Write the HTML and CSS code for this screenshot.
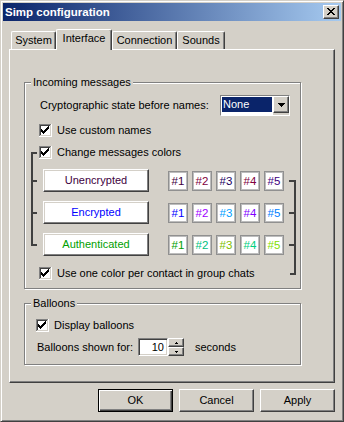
FILE: index.html
```html
<!DOCTYPE html>
<html>
<head>
<meta charset="utf-8">
<link rel="stylesheet" href="styles.css">
</head>
<body>
<svg class="defs" width="0" height="0">
  <defs>
    <symbol id="cb" viewBox="0 0 13 13">
      <rect x="0" y="0" width="13" height="13" fill="#ffffff"/>
      <path d="M0 0h12v1H0z M0 0h1v12H0z" fill="#808080"/>
      <path d="M1 1h10v1H1z M1 1h1v10H1z" fill="#404040"/>
      <path d="M1 11h11v1H1z M11 1h1v11h-1z" fill="#d4d0c8"/>
      <path d="M2 5h1v3H2z M3 6h1v3H3z M4 7h1v3H4z M5 6h1v3H5z M6 5h1v3H6z M7 4h1v3H7z M8 3h1v3H8z M9 2h1v3H9z" fill="#000000"/>
    </symbol>
  </defs>
</svg>
<div class="window">
  <div class="titlebar">
    <span class="title">Simp configuration</span>
    <span class="close bevel"><svg width="8" height="7" viewBox="0 0 8 7" shape-rendering="crispEdges"><path d="M0 0h2v1H0z M6 0h2v1H6z M1 1h2v1H1z M5 1h2v1H5z M2 2h4v1H2z M3 3h2v1H3z M2 4h4v1H2z M1 5h2v1H1z M5 5h2v1H5z M0 6h2v1H0z M6 6h2v1H6z" fill="#000"/></svg></span>
  </div>
  <div class="client">
    <div class="tabs">
      <div class="tab t-system">System</div>
      <div class="tab sel t-interface">Interface</div>
      <div class="tab t-connection">Connection</div>
      <div class="tab t-sounds">Sounds</div>
    </div>
    <div class="panel">
      <div class="group g-incoming">
        <div class="legend">Incoming messages</div>
        <div class="crypto-row">
          <span class="crypto-label">Cryptographic state before names:</span>
          <div class="combo sunken">
            <div class="combo-field"><span class="combo-sel">None</span></div>
            <div class="combo-btn bevel"><svg width="7" height="4" viewBox="0 0 7 4" shape-rendering="crispEdges"><path d="M0 0h7v1H0z M1 1h5v1H1z M2 2h3v1H2z M3 3h1v1H3z" fill="#000"/></svg></div>
          </div>
        </div>
        <div class="check-row cr-custom"><svg class="cb" width="13" height="13" shape-rendering="crispEdges"><use href="#cb"/></svg><span>Use custom names</span></div>
        <div class="colors">
          <div class="check-row cr-change"><svg class="cb" width="13" height="13" shape-rendering="crispEdges"><use href="#cb"/></svg><span>Change messages colors</span></div>
          <svg class="bracket-left" width="9" height="100" viewBox="0 0 9 100" shape-rendering="crispEdges"><path d="M1 6h2v94H1z M1 6h6v2H1z M3 34h4v2H3z M3 66h4v2H3z M3 98h4v2H3z" fill="#404040"/></svg>
          <div class="color-row r1">
            <div class="cbtn bevel c-unenc">Unencrypted</div>
            <div class="swatches">
              <span class="sw" style="color:#400040">#1</span>
              <span class="sw" style="color:#800040">#2</span>
              <span class="sw" style="color:#200060">#3</span>
              <span class="sw" style="color:#800040">#4</span>
              <span class="sw" style="color:#400080">#5</span>
            </div>
          </div>
          <div class="color-row r2">
            <div class="cbtn bevel c-enc">Encrypted</div>
            <div class="swatches">
              <span class="sw" style="color:#0000ff">#1</span>
              <span class="sw" style="color:#a000ff">#2</span>
              <span class="sw" style="color:#00a0ff">#3</span>
              <span class="sw" style="color:#8000ff">#4</span>
              <span class="sw" style="color:#0080ff">#5</span>
            </div>
          </div>
          <div class="color-row r3">
            <div class="cbtn bevel c-auth">Authenticated</div>
            <div class="swatches">
              <span class="sw" style="color:#00a000">#1</span>
              <span class="sw" style="color:#00c080">#2</span>
              <span class="sw" style="color:#80c000">#3</span>
              <span class="sw" style="color:#00d080">#4</span>
              <span class="sw" style="color:#80e000">#5</span>
            </div>
          </div>
          <div class="check-row cr-group"><svg class="cb" width="13" height="13" shape-rendering="crispEdges"><use href="#cb"/></svg><span>Use one color per contact in group chats</span></div>
          <svg class="bracket-right" width="8" height="108" viewBox="0 0 8 108" shape-rendering="crispEdges"><path d="M5 11h2v95H5z M0 11h5v2H0z M0 43h5v2H0z M0 75h5v2H0z M1 104h5v2H1z" fill="#404040"/></svg>
        </div>
      </div>
      <div class="group g-balloons">
        <div class="legend">Balloons</div>
        <div class="check-row cr-display"><svg class="cb" width="13" height="13" shape-rendering="crispEdges"><use href="#cb"/></svg><span>Display balloons</span></div>
        <div class="shown-row">
          <span class="shown-label">Balloons shown for:</span>
          <div class="edit sunken">10</div>
          <div class="spin">
            <div class="spin-btn bevel"><svg width="3" height="2" viewBox="0 0 3 2" shape-rendering="crispEdges"><path d="M1 0h1v1H1z M0 1h3v1H0z" fill="#000"/></svg></div>
            <div class="spin-btn bevel"><svg width="3" height="2" viewBox="0 0 3 2" shape-rendering="crispEdges"><path d="M0 0h3v1H0z M1 1h1v1H1z" fill="#000"/></svg></div>
          </div>
          <span class="seconds">seconds</span>
        </div>
      </div>
    </div>
    <div class="buttons">
      <div class="btn default">OK</div>
      <div class="btn bevel">Cancel</div>
      <div class="btn bevel">Apply</div>
    </div>
  </div>
</div>
</body>
</html>
```
FILE: styles.css
```css
html, body {
  margin: 0;
  padding: 0;
  background: #d4d0c8;
}
body {
  font-family: "Liberation Sans", Arial, sans-serif;
  font-size: 11px;
  color: #000;
}
.defs {
  position: absolute;
  width: 0;
  height: 0;
}
.window {
  width: 344px;
  height: 422px;
  box-sizing: border-box;
  background: #d4d0c8;
  border: 1px solid;
  border-color: #d4d0c8 #404040 #404040 #d4d0c8;
  box-shadow: inset 1px 1px #ffffff, inset -1px -1px #808080;
  padding: 2px;
}
.titlebar {
  height: 18px;
  display: flex;
  align-items: center;
  justify-content: space-between;
  padding: 0 2px;
  background: linear-gradient(to right, #0a246a, #a6caf0);
}
.title {
  color: #fff;
  font-weight: bold;
  font-size: 11.5px;
  line-height: 18px;
}
.bevel {
  box-sizing: border-box;
  background: #d4d0c8;
  border: 1px solid;
  border-color: #ffffff #404040 #404040 #ffffff;
  box-shadow: inset -1px -1px #808080, inset 1px 1px #d4d0c8;
}
.sunken {
  box-sizing: border-box;
  border: 1px solid;
  border-color: #808080 #ffffff #ffffff #808080;
  box-shadow: inset 1px 1px #404040, inset -1px -1px #d4d0c8;
}
.close {
  width: 16px;
  height: 14px;
  padding: 2px 0 0 3px;
}
.close svg { display: block; }
.client {
  padding: 8px 6px 0 6px;
}
.tabs {
  display: flex;
  align-items: flex-end;
  height: 20px;
  padding-left: 2px;
}
.tab {
  box-sizing: border-box;
  height: 18px;
  border-top: 1px solid #fff;
  border-left: 1px solid #fff;
  border-right: 1px solid #404040;
  border-radius: 2px 2px 0 0;
  box-shadow: inset -1px 0 #808080;
  background: #d4d0c8;
  text-align: center;
  line-height: 13px;
  padding-top: 2px;
}
.tab.sel {
  height: 21px;
  margin-bottom: -1px;
  position: relative;
  z-index: 1;
}
.t-system { width: 45px; }
.t-interface { width: 56px; }
.t-connection { width: 65px; }
.t-sounds { width: 48px; }
.panel {
  width: 326px;
  height: 334px;
  box-sizing: border-box;
  border: 1px solid;
  border-color: #ffffff #404040 #404040 #ffffff;
  box-shadow: inset -1px -1px #808080;
  padding: 32px 0 0 14px;
}
.group {
  width: 277px;
  box-sizing: border-box;
  border: 1px solid #808080;
  box-shadow: inset 1px 1px #ffffff, 1px 1px #ffffff;
  padding-bottom: 8px;
}
.g-balloons {
  margin-top: 14px;
}
.legend {
  width: fit-content;
  margin: -7px 0 0 6px;
  padding: 0 2px;
  background: #d4d0c8;
  line-height: 13px;
}
.crypto-row {
  display: flex;
  align-items: center;
  height: 21px;
  margin: 6px 0 0 15px;
}
.crypto-label {
  width: 180px;
  line-height: 13px;
}
.combo {
  display: flex;
  width: 70px;
  height: 21px;
}
.combo-field {
  flex: 1;
  background: #fff;
  padding: 1px;
}
.combo-sel {
  display: block;
  height: 15px;
  background: #0a246a;
  color: #fff;
  line-height: 15px;
  padding-left: 1px;
}
.combo-btn {
  width: 16px;
  height: 17px;
  display: flex;
  align-items: center;
  justify-content: center;
}
.combo-btn svg { display: block; }
.check-row {
  display: flex;
  align-items: center;
  gap: 5px;
  height: 13px;
  line-height: 13px;
  white-space: nowrap;
}
.cb { display: block; flex: none; }
.cr-custom { margin: 8px 0 0 14px; }
.colors {
  display: grid;
  grid-template-columns: 9px 250px 8px;
  grid-template-rows: 13px 10px 23px 9px 23px 9px 23px 11px 13px;
  margin: 9px 0 0 5px;
}
.cr-change { grid-column: 2; grid-row: 1; }
.bracket-left { grid-column: 1; grid-row: 1 / 8; display: block; }
.r1 { grid-column: 2; grid-row: 3; }
.r2 { grid-column: 2; grid-row: 5; }
.r3 { grid-column: 2; grid-row: 7; }
.cr-group { grid-column: 2; grid-row: 9; }
.bracket-right { grid-column: 3; grid-row: 3 / 10; display: block; }
.color-row {
  display: flex;
  align-items: center;
}
.cbtn {
  margin-left: 4px;
  width: 106px;
  height: 23px;
  background: #fff;
  text-align: center;
  line-height: 21px;
}
.c-unenc { color: #400040; }
.c-enc { color: #0000ff; }
.c-auth { color: #00a000; }
.swatches {
  display: flex;
  gap: 4px;
  margin-left: 19px;
}
.sw {
  width: 20px;
  height: 20px;
  box-sizing: border-box;
  background: #fff;
  border: 1px solid #909090;
  box-shadow: inset 0 0 0 1px #bdbdbd;
  text-align: center;
  line-height: 18px;
  font-size: 11.5px;
}
.cr-display { margin: 9px 0 0 11px; }
.shown-row {
  display: flex;
  align-items: center;
  height: 18px;
  margin: 6px 0 0 12px;
}
.shown-label {
  width: 101px;
  line-height: 13px;
}
.edit {
  width: 30px;
  height: 18px;
  background: #fff;
  text-align: right;
  padding-right: 3px;
  line-height: 16px;
}
.spin {
  display: flex;
  flex-direction: column;
  width: 16px;
}
.spin-btn {
  width: 16px;
  height: 9px;
  display: flex;
  align-items: center;
  justify-content: center;
}
.spin-btn svg { display: block; }
.seconds {
  margin-left: 11px;
  line-height: 13px;
}
.buttons {
  display: flex;
  justify-content: flex-end;
  gap: 6px;
  margin-top: 6px;
}
.btn {
  width: 75px;
  height: 23px;
  text-align: center;
  line-height: 21px;
}
.btn.default {
  box-sizing: border-box;
  background: #d4d0c8;
  border: 1px solid #000;
  box-shadow: inset 1px 1px #ffffff, inset -1px -1px #404040, inset -2px -2px #808080;
}
```
